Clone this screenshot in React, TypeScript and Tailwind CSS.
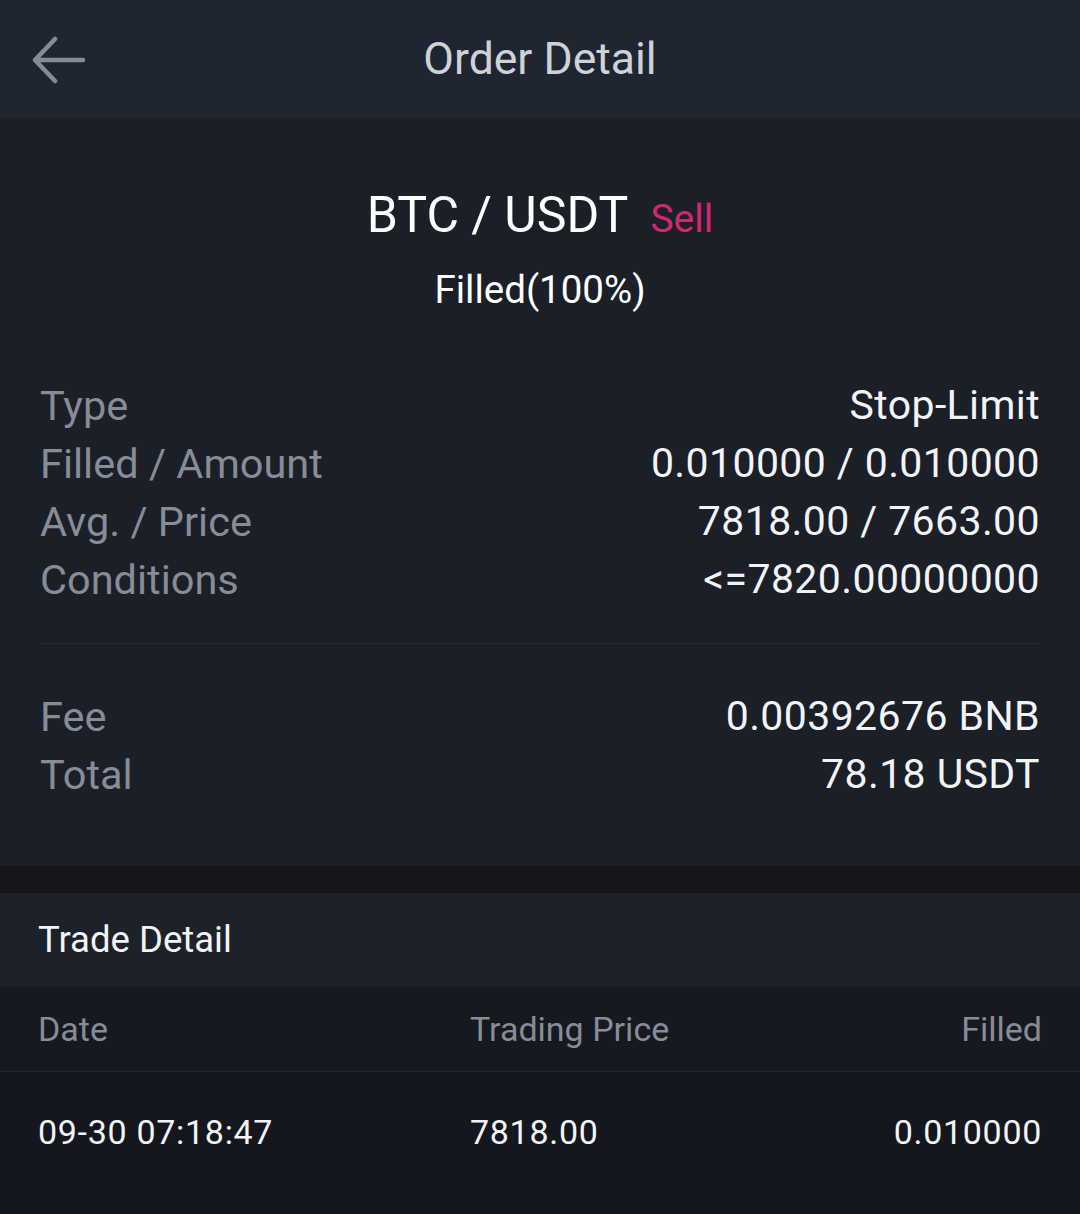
import React from "react";

const FONT = { fontFamily: "Roboto, 'Noto Sans', sans-serif" };

const orderRows = [
  ["Type", "Stop-Limit"],
  ["Filled / Amount", "0.010000 / 0.010000"],
  ["Avg. / Price", "7818.00 / 7663.00"],
  ["Conditions", "<=7820.00000000"],
];

const feeRows = [
  ["Fee", "0.00392676 BNB"],
  ["Total", "78.18 USDT"],
];

function Row({ label, value }: { label: string; value: string }) {
  return (
    <div className="flex items-center justify-between h-[58px]">
      <span className="text-[41.5px] text-[#878c96]">{label}</span>
      <span className="text-[41px] tracking-[0.4px] text-[#f2f3f5]">{value}</span>
    </div>
  );
}

export default function App() {
  return (
    <div className="w-[1080px] h-[1214px] bg-[#14171d] overflow-hidden" style={FONT}>
      {/* Header */}
      <div className="relative h-[118px] bg-[#202631] flex items-center justify-center">
        <svg className="absolute left-[31px] top-[36px]" width="54" height="48" viewBox="0 0 54 48" fill="none">
          <path d="M24 3 L4 24 L24 45 M4 24 H52" stroke="#868b95" strokeWidth="4.5" strokeLinecap="round" strokeLinejoin="round" />
        </svg>
        <h1 className="text-[44.5px] text-[#cfd2d7]">Order Detail</h1>
      </div>

      {/* Order summary */}
      <div className="bg-[#1a1f28] h-[748px] px-[40px]">
        <div className="flex items-baseline justify-center pt-[67px] gap-[22px]">
          <span className="text-[50px] leading-[60px] text-white">BTC / USDT</span>
          <span className="text-[39px] leading-[60px] text-[#d52471]">Sell</span>
        </div>
        <div className="text-center text-[38.5px] leading-[50px] text-white mt-[16px]">Filled(100%)</div>

        <div className="mt-[62px]">
          {orderRows.map(([l, v]) => (
            <Row key={l} label={l} value={v} />
          ))}
        </div>

        <div className="mt-[34px] h-px bg-[#232933]" />

        <div className="mt-[44px]">
          {feeRows.map(([l, v]) => (
            <Row key={l} label={l} value={v} />
          ))}
        </div>
      </div>

      <div className="h-[27px] bg-[#14161b]" />

      {/* Trade detail */}
      <div className="h-[94px] bg-[#1c212a] flex items-center px-[38px]">
        <span className="text-[36.5px] text-[#f2f3f5]">Trade Detail</span>
      </div>
      <div className="h-[85px] bg-[#16191f] flex items-center px-[38px] text-[34px] text-[#878c96] border-b border-[#242830]">
        <span className="w-[432px]">Date</span>
        <span className="flex-1">Trading Price</span>
        <span>Filled</span>
      </div>
      <div className="h-[120px] bg-[#14171d] flex items-center px-[38px] text-[34px] text-[#f2f3f5] tracking-[0.7px]">
        <span className="w-[432px]">09-30 07:18:47</span>
        <span className="flex-1">7818.00</span>
        <span>0.010000</span>
      </div>
    </div>
  );
}
